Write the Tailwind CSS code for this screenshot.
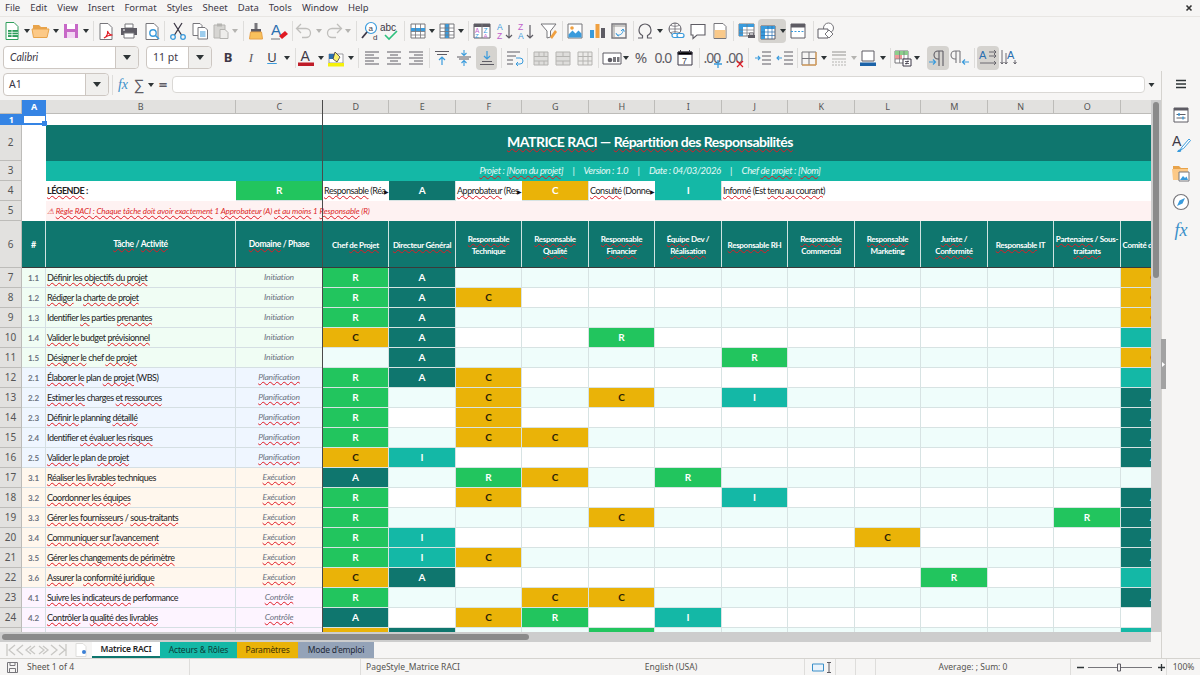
<!DOCTYPE html>
<html lang="fr">
<head>
<meta charset="UTF-8">
<title>Matrice RACI</title>
<script src="https://cdn.jsdelivr.net/npm/@tailwindcss/browser@4"></script>
</head>
<body class="w-[1200px] h-[675px] overflow-hidden bg-[#f6f5f4] font-['Noto_Sans',sans-serif] text-[#3d3846]">

<!-- menu bar -->
<div class="h-[17px] flex items-center gap-[10px] pl-[5px] pr-[7px] text-[9.5px] leading-none border-b border-[#e8e6e3]">
  <span>File</span><span>Edit</span><span>View</span><span>Insert</span><span>Format</span><span>Styles</span><span>Sheet</span><span>Data</span><span>Tools</span><span>Window</span><span>Help</span>
  <svg class="w-[8px] h-[8px] ml-auto" viewBox="0 0 8 8"><path d="M1.5 1.5l5 5M6.5 1.5l-5 5" stroke="#333" stroke-width="1.6"/></svg>
</div>

<!-- standard toolbar -->
<div class="h-[27px] flex items-center pl-[2px]">
  <svg class="w-5 h-5" viewBox="0 0 20 20"><path d="M4 1.5h8l4 4v13H4z" fill="#fff" stroke="#2e9e5b"/><path d="M6 9h10v7H6z" fill="#2e9e5b"/><path d="M6 11.3h10M6 13.6h10M10 9v7" stroke="#fff" stroke-width=".8"/></svg>
  <svg class="w-[6px] h-[4px] ml-[2px]" viewBox="0 0 6 4"><path d="M0 0h6L3 4z" fill="#2e3436"/></svg>
  <svg class="w-5 h-5 ml-px" viewBox="0 0 20 20"><path d="M2 7V4h6l2 2h6v2H2z" fill="#e8a34a"/><path d="M1 8h17l-2 8.500H2.500z" fill="#fcc987" stroke="#e8a34a"/></svg>
  <svg class="w-[6px] h-[4px] ml-[2px]" viewBox="0 0 6 4"><path d="M0 0h6L3 4z" fill="#2e3436"/></svg>
  <svg class="w-5 h-5 ml-[2px]" viewBox="0 0 20 20"><path d="M3 3h14v14H3z" fill="#c768c7"/><path d="M6 3h8v5H6z" fill="#fff"/><path d="M6 11h8v6H6z" fill="#f3d6f3"/></svg>
  <svg class="w-[6px] h-[4px] ml-[2px]" viewBox="0 0 6 4"><path d="M0 0h6L3 4z" fill="#2e3436"/></svg>
  <div class="w-px h-5 ml-[4px] bg-[#dedddb]"></div>
  <svg class="w-5 h-5 ml-[2px]" viewBox="0 0 20 20"><path d="M4 2.500h8l4 4v12H4z" fill="#fff" stroke="#77767b"/><path d="M8 17c3-1 4-5 3.500-7 1 3 3 4 5 4-3 0-6 1-8.500 3z" fill="none" stroke="#e01b24" stroke-width="1.100"/></svg>
  <svg class="w-5 h-5 ml-[3px]" viewBox="0 0 20 20"><path d="M6 3h8v4H6z" fill="#fff" stroke="#77767b"/><path d="M2 7h16v7H2z" fill="#5e5c64"/><path d="M5 12h10v5H5z" fill="#fff" stroke="#77767b"/><path d="M4 9h2" stroke="#fff"/></svg>
  <svg class="w-5 h-5 ml-[3px]" viewBox="0 0 20 20"><path d="M4 2.500h8l4 4v12H4z" fill="#fff" stroke="#77767b"/><circle cx="11" cy="12" r="3.200" fill="none" stroke="#3a9bdc" stroke-width="1.400"/><path d="M13.500 14.500l3.500 3.500" stroke="#3a9bdc" stroke-width="1.600"/></svg>
  <div class="w-px h-5 ml-[2px] bg-[#dedddb]"></div>
  <svg class="w-5 h-5 ml-[3px]" viewBox="0 0 20 20"><path d="M6 2l7.500 12M14 2L6.500 14" stroke="#3d3846" stroke-width="1.300"/><circle cx="5" cy="16" r="2.300" fill="none" stroke="#3a9bdc" stroke-width="1.300"/><circle cx="15" cy="16" r="2.300" fill="none" stroke="#3a9bdc" stroke-width="1.300"/></svg>
  <svg class="w-5 h-5 ml-[2px]" viewBox="0 0 20 20"><path d="M3 2.500h7l2 2v10H3z" fill="#fff" stroke="#77767b"/><path d="M8 6.500h7l2.500 2.500v9H8z" fill="#fff" stroke="#77767b"/><path d="M10 11h5.500M10 13h5.500M10 15h5.500" stroke="#3a9bdc"/></svg>
  <svg class="w-5 h-5 ml-px" viewBox="0 0 20 20"><path d="M3 4h11v13H3z" fill="#d6d5d2" stroke="#b5b4b1"/><path d="M6 2.500h5v3H6z" fill="#b5b4b1"/><path d="M9 8.500h5l3 3v6H9z" fill="#eeedeb" stroke="#b5b4b1"/></svg>
  <svg class="w-[6px] h-[4px] ml-px" viewBox="0 0 6 4"><path d="M0 0h6L3 4z" fill="#b5b4b1"/></svg>
  <div class="w-px h-5 ml-[5px] bg-[#dedddb]"></div>
  <svg class="w-5 h-5 ml-[2px]" viewBox="0 0 20 20"><path d="M8.500 2h3v6h-3z" fill="#77767b"/><path d="M5 8h10v3H5z" fill="#5e5c64"/><path d="M4.500 11h11l1 7h-13z" fill="#f9c15c" stroke="#e8a34a"/></svg>
  <svg class="w-5 h-5 ml-[3px]" viewBox="0 0 20 20"><text x="2" y="14" font-size="15" fill="#2a6fb0" font-family="Liberation Sans">A</text><path d="M10 15l6-5 3 3-6 5z" fill="#e01b24"/><path d="M2 18h9" stroke="#77767b"/></svg>
  <div class="w-px h-5 ml-[3px] bg-[#dedddb]"></div>
  <svg class="w-5 h-5 ml-px" viewBox="0 0 20 20"><path d="M7 3L2.500 7.500 7 12M3 7.500h9a4.500 4.500 0 0 1 0 9H8" fill="none" stroke="#c0bfbc" stroke-width="1.300"/></svg>
  <svg class="w-[6px] h-[4px] ml-[2px]" viewBox="0 0 6 4"><path d="M0 0h6L3 4z" fill="#b5b4b1"/></svg>
  <svg class="w-5 h-5 ml-[2px]" viewBox="0 0 20 20"><path d="M13 3l4.500 4.500L13 12M17 7.500H8a4.500 4.500 0 0 0 0 9h4" fill="none" stroke="#c0bfbc" stroke-width="1.300"/></svg>
  <svg class="w-[6px] h-[4px] ml-px" viewBox="0 0 6 4"><path d="M0 0h6L3 4z" fill="#b5b4b1"/></svg>
  <div class="w-px h-5 ml-[5px] bg-[#dedddb]"></div>
  <svg class="w-5 h-5 ml-[3px]" viewBox="0 0 20 20"><circle cx="11" cy="7" r="5.500" fill="#fff" stroke="#3a9bdc" stroke-width="1.200"/><path d="M7 11l-5 6" stroke="#3d3846" stroke-width="1.800"/><text x="8.500" y="9.500" font-size="8" fill="#3d3846" font-family="Liberation Sans">a</text><text x="13" y="19" font-size="8" fill="#3d3846" font-family="Liberation Sans">d</text></svg>
  <svg class="w-5 h-5" viewBox="0 0 20 20"><text x="0" y="10" font-size="10" fill="#3d3846" font-family="Liberation Sans">abc</text><path d="M5 14l4 4 8-8" fill="none" stroke="#2ec27e" stroke-width="1.600"/></svg>
  <div class="w-px h-5 ml-[4px] bg-[#dedddb]"></div>
  <svg class="w-5 h-5 ml-[3px]" viewBox="0 0 20 20"><path d="M3 3h14v14H3z" fill="#fff" stroke="#77767b"/><path d="M3 7h14v3.500H3z" fill="#3a9bdc"/><path d="M3 10.500h14M3 14h14M7.500 3v14M12.500 3v14" stroke="#77767b" stroke-width=".8"/></svg>
  <svg class="w-[6px] h-[4px] ml-px" viewBox="0 0 6 4"><path d="M0 0h6L3 4z" fill="#2e3436"/></svg>
  <svg class="w-5 h-5 ml-[2px]" viewBox="0 0 20 20"><path d="M3 3h14v14H3z" fill="#fff" stroke="#77767b"/><path d="M8 3h4v14H8z" fill="#3a9bdc"/><path d="M3 7h14M3 10.500h14M3 14h14M8 3v14M12 3v14" stroke="#77767b" stroke-width=".8"/></svg>
  <svg class="w-[6px] h-[4px] ml-px" viewBox="0 0 6 4"><path d="M0 0h6L3 4z" fill="#2e3436"/></svg>
  <div class="w-px h-5 ml-[4px] bg-[#dedddb]"></div>
  <svg class="w-5 h-5 ml-[3px]" viewBox="0 0 20 20"><path d="M2 3h16v14H2z" fill="#fff" stroke="#5e5c64"/><path d="M2 3h16v3H2z" fill="#5e5c64"/><path d="M10 3v14" stroke="#77767b"/><text x="3" y="12" font-size="6.500" fill="#c061cb" font-family="Liberation Sans">A</text><text x="11.500" y="12" font-size="6.500" fill="#3a9bdc" font-family="Liberation Sans">Z</text><text x="3" y="17" font-size="6" fill="#3a9bdc" font-family="Liberation Sans">Z</text><text x="11.500" y="17" font-size="6" fill="#c061cb" font-family="Liberation Sans">A</text></svg>
  <svg class="w-5 h-5 ml-[3px]" viewBox="0 0 20 20"><text x="2" y="9" font-size="8.500" fill="#3a9bdc" font-family="Liberation Sans">A</text><text x="2" y="18" font-size="8.500" fill="#c061cb" font-family="Liberation Sans">Z</text><path d="M14 4v13M11 14l3 3 3-3" fill="none" stroke="#5e5c64" stroke-width="1.200"/></svg>
  <svg class="w-5 h-5 ml-px" viewBox="0 0 20 20"><text x="2" y="9" font-size="8.500" fill="#c061cb" font-family="Liberation Sans">Z</text><text x="2" y="18" font-size="8.500" fill="#3a9bdc" font-family="Liberation Sans">A</text><path d="M14 4v13M11 14l3 3 3-3" fill="none" stroke="#5e5c64" stroke-width="1.200"/></svg>
  <svg class="w-5 h-5 ml-[3px]" viewBox="0 0 20 20"><path d="M2 3h15l-5.500 7v6l-3.500 1v-7z" fill="#fff" stroke="#77767b"/><path d="M11 16l5-7 2 2-5 7z" fill="#f0a040"/></svg>
  <div class="w-px h-5 ml-[3px] bg-[#dedddb]"></div>
  <svg class="w-5 h-5 ml-[2px]" viewBox="0 0 20 20"><path d="M3 3h14v14H3z" fill="#fff" stroke="#77767b"/><path d="M3.500 16.500v-3l4-4 3 3 3-3 3 3v4z" fill="#3a9bdc"/><circle cx="7" cy="7" r="1.800" fill="#f0a040"/></svg>
  <svg class="w-5 h-5 ml-[2px]" viewBox="0 0 20 20"><path d="M3 9h4v8H3z" fill="#3a9bdc"/><path d="M8.500 3h4v14h-4z" fill="#f0a040"/><path d="M14 7h4v10h-4z" fill="#5e5c64"/></svg>
  <svg class="w-5 h-5 ml-[2px]" viewBox="0 0 20 20"><path d="M3 3h14v14H3z" fill="#f6f5f4" stroke="#77767b" stroke-width="1.400"/><path d="M5 3v14M3 5h14" stroke="#9a9996"/><path d="M8 14a5 5 0 0 0 6-6M12 10l2-2 1.500 2.500M8 14l-1-2M8 14l2 1" fill="none" stroke="#3a9bdc"/></svg>
  <div class="w-px h-5 ml-[4px] bg-[#dedddb]"></div>
  <svg class="w-5 h-5 ml-px" viewBox="0 0 20 20"><path d="M3 17h4.500v-2.500A6 6 0 0 1 4 9a6 6 0 0 1 12 0 6 6 0 0 1-3.500 5.500V17H17" fill="none" stroke="#5e5c64" stroke-width="1.200"/></svg>
  <svg class="w-[6px] h-[4px] ml-[2px]" viewBox="0 0 6 4"><path d="M0 0h6L3 4z" fill="#2e3436"/></svg>
  <svg class="w-5 h-5 ml-[3px]" viewBox="0 0 20 20"><circle cx="9" cy="8" r="6" fill="#fff" stroke="#5e5c64"/><path d="M3 8h12M9 2v12M5 4.500c2.500 1 5.500 1 8 0M5 11.500c2.500-1 5.500-1 8 0" fill="none" stroke="#5e5c64" stroke-width=".7"/><rect x="6" y="12.500" width="7" height="4" rx="2" fill="#fff" stroke="#3a9bdc" stroke-width="1.200"/><rect x="11" y="12.500" width="7" height="4" rx="2" fill="#fff" stroke="#3a9bdc" stroke-width="1.200"/></svg>
  <svg class="w-5 h-5 ml-[2px]" viewBox="0 0 20 20"><path d="M3 3.500h14v10.500H9l-4 3.500V14H3z" fill="#fff" stroke="#5e5c64" stroke-width="1.100"/></svg>
  <svg class="w-5 h-5 ml-[2px]" viewBox="0 0 20 20"><path d="M4 2.500h9l3 3v12H4z" fill="#fff" stroke="#77767b"/><path d="M4.500 9h11v8h-11z" fill="#f9c98a"/></svg>
  <div class="w-px h-5 ml-[3px] bg-[#dedddb]"></div>
  <svg class="w-5 h-5 ml-[3px]" viewBox="0 0 20 20"><path d="M2 3h15v12H2z" fill="#fff" stroke="#77767b"/><path d="M2 3h15v3H2zM2 3h4v12H2z" fill="#3a9bdc"/><path d="M2 9h15M2 12h15M10 3v12" stroke="#77767b" stroke-width=".7"/><path d="M11 14h7v3h-7z" fill="#5e5c64"/><path d="M12.500 12h4v2h-4z" fill="#fff" stroke="#5e5c64" stroke-width=".8"/></svg>
  <div class="w-[28px] h-6 ml-px flex items-center bg-[#d5d3cf] rounded">
    <svg class="w-5 h-5" viewBox="0 0 20 20"><path d="M3 5h14v13H3z" fill="#fff" stroke="#5e5c64"/><path d="M3 5h14v3H3zM3 5h4v13H3z" fill="#3a9bdc"/><path d="M3 11h14M3 14.500h14M10 5v13M14 5v13" stroke="#2a6fb0" stroke-width=".7"/></svg>
    <svg class="w-[6px] h-[4px] ml-[2px]" viewBox="0 0 6 4"><path d="M0 0h6L3 4z" fill="#2e3436"/></svg>
  </div>
  <svg class="w-5 h-5 ml-[2px]" viewBox="0 0 20 20"><path d="M3 3h14v14H3z" fill="#fff" stroke="#5e5c64"/><path d="M3 3h14v3.500H3z" fill="#5e5c64"/><path d="M3 10.500h14" stroke="#3a9bdc" stroke-dasharray="2 1.500"/></svg>
  <div class="w-px h-5 ml-[5px] bg-[#dedddb]"></div>
  <svg class="w-5 h-5 ml-[2px]" viewBox="0 0 20 20"><circle cx="12.500" cy="7" r="5" fill="#fff" stroke="#77767b"/><path d="M2 8h10v9H2z" fill="#fff" stroke="#5e5c64"/><path d="M13 9l4 4-4 4-4-4z" fill="#fff" stroke="#77767b"/></svg>
</div>

<!-- formatting toolbar -->
<div class="h-[27px] flex items-center pl-[3px]">
  <div class="w-[136px] h-[23px] flex bg-white border border-[#cdc7c2] rounded text-[10.5px]">
    <span class="flex-1 flex items-center pl-[6px] italic font-['Lato']">Calibri</span>
    <span class="w-[23px] flex items-center justify-center bg-[#f0efed] border-l border-[#cdc7c2] rounded-r"><svg class="w-[8px] h-[5px]" viewBox="0 0 8 5"><path d="M0 0h8L4 5z" fill="#2e3436"/></svg></span>
  </div>
  <div class="w-[66px] h-[23px] ml-[7px] flex bg-white border border-[#cdc7c2] rounded text-[10.5px]">
    <span class="flex-1 flex items-center pl-[6px]">11 pt</span>
    <span class="w-[23px] flex items-center justify-center bg-[#f0efed] border-l border-[#cdc7c2] rounded-r"><svg class="w-[8px] h-[5px]" viewBox="0 0 8 5"><path d="M0 0h8L4 5z" fill="#2e3436"/></svg></span>
  </div>
  <span class="w-5 ml-[6px] text-center text-[13px] font-bold text-[#3d3846]">B</span>
  <span class="w-5 ml-[3px] text-center text-[13px] italic font-['Liberation_Serif'] text-[#5e5c64]">I</span>
  <span class="w-5 ml-px text-center text-[13px] text-[#3d3846] underline decoration-[#3a9bdc]">U</span>
  <svg class="w-[6px] h-[4px] ml-[2px]" viewBox="0 0 6 4"><path d="M0 0h6L3 4z" fill="#2e3436"/></svg>
  <div class="w-px h-5 ml-[5px] bg-[#dedddb]"></div>
  <svg class="w-5 h-5" viewBox="0 0 20 20"><text x="4.500" y="13" font-size="14" fill="#3d3846" font-family="Liberation Sans">A</text><path d="M2 14.500h16V18H2z" fill="#c01c28"/></svg>
  <svg class="w-[6px] h-[4px] ml-[2px]" viewBox="0 0 6 4"><path d="M0 0h6L3 4z" fill="#2e3436"/></svg>
  <svg class="w-5 h-5 ml-[2px]" viewBox="0 0 20 20"><path d="M3 6h14v9H3z" fill="#fff" stroke="#77767b" stroke-width=".7"/><path d="M3 6h6v5H3z" fill="#2a6fb0"/><path d="M9 4l5 5-3 5-4-3z" fill="#f9f06b" stroke="#3d3846" stroke-width=".8"/><path d="M2 15h16v3.500H2z" fill="#f5f10a"/></svg>
  <svg class="w-[6px] h-[4px] ml-[2px]" viewBox="0 0 6 4"><path d="M0 0h6L3 4z" fill="#2e3436"/></svg>
  <div class="w-px h-5 ml-[4px] bg-[#dedddb]"></div>
  <svg class="w-5 h-5 ml-[3px]" viewBox="0 0 20 20"><path d="M3 4h14M3 7h9M3 10h14M3 13h9M3 16h14" stroke="#5e5c64"/></svg>
  <svg class="w-5 h-5 ml-[2px]" viewBox="0 0 20 20"><path d="M3 4h14M6 7h8M3 10h14M6 13h8M3 16h14" stroke="#5e5c64"/></svg>
  <svg class="w-5 h-5 ml-[2px]" viewBox="0 0 20 20"><path d="M3 4h14M8 7h9M3 10h14M8 13h9M3 16h14" stroke="#5e5c64"/></svg>
  <div class="w-px h-5 ml-[3px] bg-[#dedddb]"></div>
  <svg class="w-5 h-5 ml-[2px]" viewBox="0 0 20 20"><path d="M3 3.500h14M5 6.500h10" stroke="#5e5c64"/><path d="M10 17V9M7 12l3-3 3 3" fill="none" stroke="#3a9bdc" stroke-width="1.200"/></svg>
  <svg class="w-5 h-5 ml-[2px]" viewBox="0 0 20 20"><path d="M3 9h14M5 11h10" stroke="#5e5c64"/><path d="M10 2v5M7.500 5l2.500 2.500L12.500 5M10 18v-5M7.500 15l2.500-2.500 2.500 2.500" fill="none" stroke="#3a9bdc" stroke-width="1.100"/></svg>
  <div class="w-[21px] h-6 ml-[2px] flex items-center justify-center bg-[#d5d3cf] rounded"><svg class="w-5 h-5" viewBox="0 0 20 20"><path d="M3 16.500h14M5 13.500h10" stroke="#5e5c64"/><path d="M10 3v8M7 8l3 3 3-3" fill="none" stroke="#3a9bdc" stroke-width="1.200"/></svg></div>
  <div class="w-px h-5 ml-[4px] bg-[#dedddb]"></div>
  <svg class="w-5 h-5 ml-[2px]" viewBox="0 0 20 20"><path d="M3 4h13M3 8h9M3 12h6M3 16h6" stroke="#5e5c64"/><path d="M12 10h4a2 2 0 0 1 0 6h-4M14 14l-2 2 2 2" fill="none" stroke="#3a9bdc"/></svg>
  <div class="w-px h-5 ml-[3px] bg-[#dedddb]"></div>
  <svg class="w-5 h-5 ml-[3px]" viewBox="0 0 20 20"><path d="M3 4h14v13H3z" fill="#dedddb" stroke="#b5b4b1"/><path d="M3 8.500h14M3 13h14M8 4v4.500M13 4v4.500M8 13v4M13 13v4" stroke="#b5b4b1"/></svg>
  <svg class="w-5 h-5 ml-[2px]" viewBox="0 0 20 20"><path d="M3 4h14v13H3z" fill="#dedddb" stroke="#b5b4b1"/><path d="M3 8.500h14M3 13h14M10 4v4.500M10 13v4" stroke="#b5b4b1"/></svg>
  <svg class="w-5 h-5 ml-[2px]" viewBox="0 0 20 20"><path d="M3 4h14v13H3z" fill="#ebeae8" stroke="#b5b4b1"/><path d="M3 8.500h14M3 13h14M8 4v13M13 4v13" stroke="#b5b4b1"/></svg>
  <div class="w-px h-5 ml-[3px] bg-[#dedddb]"></div>
  <svg class="w-5 h-5 ml-[3px]" viewBox="0 0 20 20"><path d="M1 5h18v11H1z" fill="#fff" stroke="#5e5c64"/><circle cx="8" cy="12" r="2.300" fill="#5e5c64"/><path d="M11 9h3v5h-3zM15 9h2.500v5H15z" fill="#77767b"/></svg>
  <svg class="w-[6px] h-[4px] ml-px" viewBox="0 0 6 4"><path d="M0 0h6L3 4z" fill="#2e3436"/></svg>
  <span class="w-5 ml-[2px] text-center text-[15px] text-[#5e5c64]">%</span>
  <span class="w-5 ml-[2px] text-center text-[14px] tracking-[-1px] text-[#5e5c64]">0.0</span>
  <svg class="w-5 h-5 ml-[2px]" viewBox="0 0 20 20"><path d="M3 4h14v13H3z" fill="#fff" stroke="#3d3846"/><path d="M3 4h14v2.500H3zM5.500 2v3M14.500 2v3" stroke="#3d3846"/><text x="7" y="15.500" font-size="9" fill="#3d3846" font-family="Liberation Sans">7</text></svg>
  <div class="w-px h-5 ml-[4px] bg-[#dedddb]"></div>
  <div class="w-5 h-5 ml-[2px] relative text-[14px] leading-5 tracking-[-1px] text-[#5e5c64] text-center">.00<svg class="absolute right-0 bottom-0 w-[8px] h-[8px]" viewBox="0 0 8 8"><path d="M4 0v8M0 4h8" stroke="#3a9bdc" stroke-width="1.300"/></svg></div>
  <div class="w-5 h-5 ml-[2px] relative text-[14px] leading-5 tracking-[-1px] text-[#5e5c64] text-center">.00<svg class="absolute right-0 bottom-0 w-[8px] h-[8px]" viewBox="0 0 8 8"><path d="M1 1l6 6M7 1L1 7" stroke="#e01b24" stroke-width="1.200"/></svg></div>
  <div class="w-px h-5 ml-[4px] bg-[#dedddb]"></div>
  <svg class="w-5 h-5 ml-[4px]" viewBox="0 0 20 20"><path d="M9 4h9M9 8h9M9 12h9M9 16h9" stroke="#5e5c64"/><path d="M2 10h5M5 8l2 2-2 2" fill="none" stroke="#3a9bdc" stroke-width="1.100"/></svg>
  <svg class="w-5 h-5 ml-[2px]" viewBox="0 0 20 20"><path d="M9 4h9M9 8h9M9 12h9M9 16h9" stroke="#5e5c64"/><path d="M7 10H2M4 8l-2 2 2 2" fill="none" stroke="#3a9bdc" stroke-width="1.100"/></svg>
  <div class="w-px h-5 ml-[2px] bg-[#dedddb]"></div>
  <svg class="w-5 h-5 ml-px" viewBox="0 0 20 20"><path d="M3 4h14v13H3zM10 4v13M3 10.500h14" fill="none" stroke="#77767b"/><path d="M3 17h14M17 4v13" stroke="#f0a040"/></svg>
  <svg class="w-[6px] h-[4px] ml-[2px]" viewBox="0 0 6 4"><path d="M0 0h6L3 4z" fill="#2e3436"/></svg>
  <svg class="w-5 h-5 ml-[2px]" viewBox="0 0 20 20"><path d="M3 4h14M3 7h14" stroke="#b5b4b1" stroke-width="1.500"/><path d="M3 11h14" stroke="#b5b4b1"/><path d="M3 14h14M3 17h14" stroke="#b5b4b1" stroke-dasharray="2 1"/></svg>
  <svg class="w-[6px] h-[4px] ml-[2px]" viewBox="0 0 6 4"><path d="M0 0h6L3 4z" fill="#b5b4b1"/></svg>
  <svg class="w-5 h-5 ml-px" viewBox="0 0 20 20"><path d="M4 3h12v10H4z" fill="#fff" stroke="#5e5c64"/><path d="M2 14.500h16V18H2z" fill="#1c63a8"/></svg>
  <svg class="w-[6px] h-[4px] ml-[2px]" viewBox="0 0 6 4"><path d="M0 0h6L3 4z" fill="#2e3436"/></svg>
  <div class="w-px h-5 ml-[4px] bg-[#dedddb]"></div>
  <svg class="w-5 h-5 ml-[2px]" viewBox="0 0 20 20"><path d="M2 3h13v12H2z" fill="#fff" stroke="#77767b"/><path d="M2 3h13v4H2z" fill="#8ccf8c"/><path d="M2 7h7v4H2z" fill="#ef9a9a"/><path d="M6.500 3v12M11 3v12M2 11h13" stroke="#77767b" stroke-width=".7"/><path d="M10 11h8v7h-8z" fill="#fff" stroke="#3d3846"/><path d="M12 13.500h4M12 15.500h4M15 12.500l-2 4" stroke="#3d3846" stroke-width=".8"/></svg>
  <svg class="w-[6px] h-[4px] ml-px" viewBox="0 0 6 4"><path d="M0 0h6L3 4z" fill="#2e3436"/></svg>
  <div class="w-[22px] h-6 ml-[7px] flex items-center justify-center bg-[#d5d3cf] rounded"><svg class="w-5 h-5" viewBox="0 0 20 20"><path d="M11 3v15M15 3v15M15 3h-5a4 4 0 0 0 0 8h1" fill="none" stroke="#5e5c64" stroke-width="1.100"/><path d="M1 14h6M5 11.500L7.500 14 5 16.500" fill="none" stroke="#3a9bdc" stroke-width="1.200"/></svg></div>
  <svg class="w-5 h-5 ml-px" viewBox="0 0 20 20"><path d="M6 3v12M10 3v12M10 3H5a4 4 0 0 0 0 8h1" fill="none" stroke="#77767b" stroke-width="1.100"/><path d="M19 14h-6M15 11.500L12.500 14l2.500 2.500" fill="none" stroke="#3a9bdc" stroke-width="1.200"/></svg>
  <div class="w-px h-5 ml-[4px] bg-[#dedddb]"></div>
  <div class="w-[22px] h-6 ml-[2px] flex items-center justify-center bg-[#d5d3cf] rounded"><svg class="w-5 h-5" viewBox="0 0 20 20"><text x="1" y="11" font-size="11" fill="#2a6fb0" font-family="Liberation Sans">A</text><path d="M11 4h7M11 8h7M2 15h16M16 2l2 2-2 2M16 6l2 2-2 2M16 13l2 2-2 2" fill="none" stroke="#5e5c64" stroke-width=".9"/></svg></div>
  <svg class="w-5 h-5" viewBox="0 0 20 20"><text x="8" y="11" font-size="11" fill="#2a6fb0" font-family="Liberation Sans">A</text><path d="M3 2v14M7 5v11M16 12v4M1.500 14l1.500 2 1.500-2M5.500 14L7 16l1.500-2M14.500 14l1.500 2 1.500-2" fill="none" stroke="#5e5c64" stroke-width=".9"/></svg>
</div>

<div class="flex h-[587px]">
  <div class="w-[1161px] flex flex-col">
    <!-- formula bar -->
    <div class="h-[27px] flex items-center pl-[3px]">
      <div class="w-[106px] h-[23px] flex bg-white border border-[#cdc7c2] rounded text-[10.5px]">
        <span class="flex-1 flex items-center pl-[5px]">A1</span>
        <span class="w-[23px] flex items-center justify-center bg-[#f0efed] border-l border-[#cdc7c2] rounded-r"><svg class="w-[8px] h-[5px]" viewBox="0 0 8 5"><path d="M0 0h8L4 5z" fill="#2e3436"/></svg></span>
      </div>
      <div class="w-px h-5 ml-[3px] bg-[#dedddb]"></div>
      <span class="w-4 ml-[2px] text-center text-[14px] italic font-['Liberation_Serif'] text-[#3a8fc9]">fx</span>
      <span class="w-4 text-center text-[15px] text-[#5e5c64]">∑</span>
      <svg class="w-[6px] h-[4px] ml-[1px]" viewBox="0 0 6 4"><path d="M0 0h6L3 4z" fill="#2e3436"/></svg>
      <span class="w-4 ml-[1px] text-center text-[15px] font-bold text-[#5e5c64]">=</span>
      <div class="w-[973px] h-[17px] ml-[1px] bg-white border border-[#dad8d5] rounded-sm"></div>
      <svg class="w-[7px] h-[4px] ml-[3px]" viewBox="0 0 6 4"><path d="M0 0h6L3 4z" fill="#2e3436"/></svg>
    </div>

    <!-- sheet and vertical scrollbar -->
    <div class="h-[534px] pt-[2px] flex">
      <div class="relative w-[1151px] h-[532px] overflow-hidden bg-white">
        <div id="sheet" class="w-[1254px] grid grid-cols-[22px_24px_190px_87px_66px_67px_66px_67px_66px_67px_66px_67px_66px_67px_66px_67px_66px_67px] grid-rows-[14px_11px_36px_20px_20px_20px_47px] auto-rows-[20px] font-['Lato',sans-serif] text-[9px] tracking-[-0.45px] text-[#222]">
          <!-- column headers -->
          <div class="bg-[#e2e1df] border-r border-b border-[#bdbcb9]"></div>
          <div class="flex items-center justify-center bg-[#3584e4] text-white font-bold font-['Noto_Sans'] text-[9px]">A</div>
          <div class="flex items-center justify-center bg-[#e2e1df] border-r border-b border-[#bdbcb9] text-[#555] font-['Noto_Sans'] text-[9px]">B</div>
          <div class="flex items-center justify-center bg-[#e2e1df] border-r border-b border-[#bdbcb9] text-[#555] font-['Noto_Sans'] text-[9px]">C</div>
          <div class="flex items-center justify-center bg-[#e2e1df] border-r border-b border-[#bdbcb9] text-[#555] font-['Noto_Sans'] text-[9px]">D</div>
          <div class="flex items-center justify-center bg-[#e2e1df] border-r border-b border-[#bdbcb9] text-[#555] font-['Noto_Sans'] text-[9px]">E</div>
          <div class="flex items-center justify-center bg-[#e2e1df] border-r border-b border-[#bdbcb9] text-[#555] font-['Noto_Sans'] text-[9px]">F</div>
          <div class="flex items-center justify-center bg-[#e2e1df] border-r border-b border-[#bdbcb9] text-[#555] font-['Noto_Sans'] text-[9px]">G</div>
          <div class="flex items-center justify-center bg-[#e2e1df] border-r border-b border-[#bdbcb9] text-[#555] font-['Noto_Sans'] text-[9px]">H</div>
          <div class="flex items-center justify-center bg-[#e2e1df] border-r border-b border-[#bdbcb9] text-[#555] font-['Noto_Sans'] text-[9px]">I</div>
          <div class="flex items-center justify-center bg-[#e2e1df] border-r border-b border-[#bdbcb9] text-[#555] font-['Noto_Sans'] text-[9px]">J</div>
          <div class="flex items-center justify-center bg-[#e2e1df] border-r border-b border-[#bdbcb9] text-[#555] font-['Noto_Sans'] text-[9px]">K</div>
          <div class="flex items-center justify-center bg-[#e2e1df] border-r border-b border-[#bdbcb9] text-[#555] font-['Noto_Sans'] text-[9px]">L</div>
          <div class="flex items-center justify-center bg-[#e2e1df] border-r border-b border-[#bdbcb9] text-[#555] font-['Noto_Sans'] text-[9px]">M</div>
          <div class="flex items-center justify-center bg-[#e2e1df] border-r border-b border-[#bdbcb9] text-[#555] font-['Noto_Sans'] text-[9px]">N</div>
          <div class="flex items-center justify-center bg-[#e2e1df] border-r border-b border-[#bdbcb9] text-[#555] font-['Noto_Sans'] text-[9px]">O</div>
          <div class="bg-[#e2e1df] border-r border-b border-[#bdbcb9]"></div>
          <div class="bg-[#e2e1df] border-r border-b border-[#bdbcb9]"></div>

          <!-- row 1 -->
          <div class="flex items-center justify-center bg-[#3584e4] text-white font-bold font-['Noto_Sans'] text-[9px] leading-none">1</div>
          <div class="relative border-2 border-[#3584e4] border-r-[1px]"><span class="absolute -right-[2px] -bottom-[3px] w-[5px] h-[5px] bg-[#3584e4]"></span></div>
          <div class="col-span-16"></div>

          <!-- row 2 -->
          <div class="flex items-center justify-center bg-[#e2e1df] border-r border-b border-[#bdbcb9] text-[#555] font-['Noto_Sans'] text-[10px]">2</div>
          <div></div>
          <div class="col-span-16 flex items-center justify-center pb-[3px] bg-[#0f766e] text-white font-bold text-[14px] tracking-[-0.5px]"><u class="underline decoration-wavy decoration-[#e01b24] decoration-1 [text-decoration-skip-ink:none]">MATRICE RACI</u>&nbsp;—&nbsp;<u class="underline decoration-wavy decoration-[#e01b24] decoration-1 [text-decoration-skip-ink:none]">Répartition des Responsabilités</u></div>

          <!-- row 3 -->
          <div class="flex items-center justify-center bg-[#e2e1df] border-r border-b border-[#bdbcb9] text-[#555] font-['Noto_Sans'] text-[10px]">3</div>
          <div></div>
          <div class="col-span-16 flex items-center justify-center bg-[#14b8a6] text-white/90 italic text-[9.5px] tracking-[-0.35px] whitespace-pre"><span><u class="underline decoration-wavy decoration-[#e01b24] decoration-1 [text-decoration-skip-ink:none]">Projet</u> : [<u class="underline decoration-wavy decoration-[#e01b24] decoration-1 [text-decoration-skip-ink:none]">Nom du projet</u>]     |     Version : 1.0     |     Date : 04/03/2026     |     Chef <u class="underline decoration-wavy decoration-[#e01b24] decoration-1 [text-decoration-skip-ink:none]">de projet</u> : [<u class="underline decoration-wavy decoration-[#e01b24] decoration-1 [text-decoration-skip-ink:none]">Nom</u>]</span></div>

          <!-- row 4: legend -->
          <div class="flex items-center justify-center bg-[#e2e1df] border-r border-b border-[#bdbcb9] text-[#555] font-['Noto_Sans'] text-[10px]">4</div>
          <div></div>
          <div class="flex items-center pl-px font-bold"><u class="underline decoration-wavy decoration-[#e01b24] decoration-1 [text-decoration-skip-ink:none]">LÉGENDE</u>&nbsp;:</div>
          <div class="flex items-center justify-center bg-[#22c55e] text-white font-bold text-[10px] border-r border-b border-[#d7e3e3]">R</div>
          <div class="relative flex items-center pl-px whitespace-nowrap overflow-hidden"><span><u class="underline decoration-wavy decoration-[#e01b24] decoration-1 [text-decoration-skip-ink:none]">Responsable</u> (Réa</span><span class="absolute right-0 text-[6px] text-[#111]">▶</span></div>
          <div class="flex items-center justify-center bg-[#0f766e] text-white font-bold text-[10px] border-r border-b border-[#d7e3e3]">A</div>
          <div class="relative flex items-center pl-px whitespace-nowrap overflow-hidden"><span><u class="underline decoration-wavy decoration-[#e01b24] decoration-1 [text-decoration-skip-ink:none]">Approbateur</u> (Res</span><span class="absolute right-0 text-[6px] text-[#111]">▶</span></div>
          <div class="flex items-center justify-center bg-[#eab308] text-white font-bold text-[10px] border-r border-b border-[#d7e3e3]">C</div>
          <div class="relative flex items-center pl-px whitespace-nowrap overflow-hidden"><span><u class="underline decoration-wavy decoration-[#e01b24] decoration-1 [text-decoration-skip-ink:none]">Consulté</u> (Donne</span><span class="absolute right-0 text-[6px] text-[#111]">▶</span></div>
          <div class="flex items-center justify-center bg-[#14b8a6] text-white font-bold text-[10px] border-r border-b border-[#d7e3e3]">I</div>
          <div class="col-span-8 flex items-center pl-px"><span><u class="underline decoration-wavy decoration-[#e01b24] decoration-1 [text-decoration-skip-ink:none]">Informé</u> (Est <u class="underline decoration-wavy decoration-[#e01b24] decoration-1 [text-decoration-skip-ink:none]">tenu au courant</u>)</span></div>

          <!-- row 5: rule -->
          <div class="flex items-center justify-center bg-[#e2e1df] border-r border-b border-[#bdbcb9] text-[#555] font-['Noto_Sans'] text-[10px]">5</div>
          <div></div>
          <div class="col-span-16 flex items-center pl-px bg-[#fef2f2] text-[#dc2626] italic text-[8px] tracking-[-0.1px]"><span>⚠ <u class="underline decoration-wavy decoration-[#e01b24] decoration-1 [text-decoration-skip-ink:none]">Règle RACI : Chaque tâche doit avoir exactement</u> 1 <u class="underline decoration-wavy decoration-[#e01b24] decoration-1 [text-decoration-skip-ink:none]">Approbateur</u> (A) <u class="underline decoration-wavy decoration-[#e01b24] decoration-1 [text-decoration-skip-ink:none]">et au moins</u> 1 <u class="underline decoration-wavy decoration-[#e01b24] decoration-1 [text-decoration-skip-ink:none]">Responsable</u> (R)</span></div>

          <!-- row 6: table header -->
          <div class="flex items-center justify-center bg-[#e2e1df] border-r border-b border-[#bdbcb9] text-[#555] font-['Noto_Sans'] text-[10px]">6</div>
          <div class="flex items-center justify-center bg-[#0f766e] text-white font-bold text-[9px] border-r border-[#cfe3e1]">#</div>
          <div class="flex items-center justify-center bg-[#0f766e] text-white font-bold text-[8.5px] tracking-[-0.3px] border-r border-[#cfe3e1]"><span><u class="underline decoration-wavy decoration-[#e01b24] decoration-1 [text-decoration-skip-ink:none]">Tâche</u> / <u class="underline decoration-wavy decoration-[#e01b24] decoration-1 [text-decoration-skip-ink:none]">Activité</u></span></div>
          <div class="flex items-center justify-center bg-[#0f766e] text-white font-bold text-[8.5px] tracking-[-0.3px] border-r border-[#cfe3e1]"><span><u class="underline decoration-wavy decoration-[#e01b24] decoration-1 [text-decoration-skip-ink:none]">Domaine</u> / Phase</span></div>
          <div class="flex items-center justify-center text-center leading-[12px] bg-[#0f766e] text-white font-bold text-[8px] tracking-[-0.3px] border-r border-[#cfe3e1]"><span>Chef <u class="underline decoration-wavy decoration-[#e01b24] decoration-1 [text-decoration-skip-ink:none]">de Projet</u></span></div>
          <div class="flex items-center justify-center text-center leading-[12px] bg-[#0f766e] text-white font-bold text-[8px] tracking-[-0.3px] border-r border-[#cfe3e1]"><u class="underline decoration-wavy decoration-[#e01b24] decoration-1 [text-decoration-skip-ink:none]">Directeur Général</u></div>
          <div class="flex items-center justify-center text-center leading-[12px] bg-[#0f766e] text-white font-bold text-[8px] tracking-[-0.3px] border-r border-[#cfe3e1]"><span><u class="underline decoration-wavy decoration-[#e01b24] decoration-1 [text-decoration-skip-ink:none]">Responsable</u><br>Technique</span></div>
          <div class="flex items-center justify-center text-center leading-[12px] bg-[#0f766e] text-white font-bold text-[8px] tracking-[-0.3px] border-r border-[#cfe3e1]"><span><u class="underline decoration-wavy decoration-[#e01b24] decoration-1 [text-decoration-skip-ink:none]">Responsable</u><br><u class="underline decoration-wavy decoration-[#e01b24] decoration-1 [text-decoration-skip-ink:none]">Qualité</u></span></div>
          <div class="flex items-center justify-center text-center leading-[12px] bg-[#0f766e] text-white font-bold text-[8px] tracking-[-0.3px] border-r border-[#cfe3e1]"><span><u class="underline decoration-wavy decoration-[#e01b24] decoration-1 [text-decoration-skip-ink:none]">Responsable</u><br><u class="underline decoration-wavy decoration-[#e01b24] decoration-1 [text-decoration-skip-ink:none]">Financier</u></span></div>
          <div class="flex items-center justify-center text-center leading-[12px] bg-[#0f766e] text-white font-bold text-[8px] tracking-[-0.3px] border-r border-[#cfe3e1]"><span><u class="underline decoration-wavy decoration-[#e01b24] decoration-1 [text-decoration-skip-ink:none]">Équipe</u> Dev /<br><u class="underline decoration-wavy decoration-[#e01b24] decoration-1 [text-decoration-skip-ink:none]">Réalisation</u></span></div>
          <div class="flex items-center justify-center text-center leading-[12px] bg-[#0f766e] text-white font-bold text-[8px] tracking-[-0.3px] border-r border-[#cfe3e1]"><span><u class="underline decoration-wavy decoration-[#e01b24] decoration-1 [text-decoration-skip-ink:none]">Responsable</u> RH</span></div>
          <div class="flex items-center justify-center text-center leading-[12px] bg-[#0f766e] text-white font-bold text-[8px] tracking-[-0.3px] border-r border-[#cfe3e1]"><span><u class="underline decoration-wavy decoration-[#e01b24] decoration-1 [text-decoration-skip-ink:none]">Responsable</u><br>Commercial</span></div>
          <div class="flex items-center justify-center text-center leading-[12px] bg-[#0f766e] text-white font-bold text-[8px] tracking-[-0.3px] border-r border-[#cfe3e1]"><span><u class="underline decoration-wavy decoration-[#e01b24] decoration-1 [text-decoration-skip-ink:none]">Responsable</u><br>Marketing</span></div>
          <div class="flex items-center justify-center text-center leading-[12px] bg-[#0f766e] text-white font-bold text-[8px] tracking-[-0.3px] border-r border-[#cfe3e1]"><span><u class="underline decoration-wavy decoration-[#e01b24] decoration-1 [text-decoration-skip-ink:none]">Juriste</u> /<br><u class="underline decoration-wavy decoration-[#e01b24] decoration-1 [text-decoration-skip-ink:none]">Conformité</u></span></div>
          <div class="flex items-center justify-center text-center leading-[12px] bg-[#0f766e] text-white font-bold text-[8px] tracking-[-0.3px] border-r border-[#cfe3e1]"><span><u class="underline decoration-wavy decoration-[#e01b24] decoration-1 [text-decoration-skip-ink:none]">Responsable</u> IT</span></div>
          <div class="flex items-center justify-center text-center leading-[12px] bg-[#0f766e] text-white font-bold text-[8px] tracking-[-0.3px] border-r border-[#cfe3e1]"><span><u class="underline decoration-wavy decoration-[#e01b24] decoration-1 [text-decoration-skip-ink:none]">Partenaires</u> / Sous-<br><u class="underline decoration-wavy decoration-[#e01b24] decoration-1 [text-decoration-skip-ink:none]">traitants</u></span></div>
          <div class="flex items-center justify-center whitespace-nowrap bg-[#0f766e] text-white font-bold text-[8px] tracking-[-0.3px] border-r border-[#cfe3e1]">Comité de Pilotage</div>
          <div class="bg-[#0f766e]"></div>
        </div>
        <!-- freeze lines -->
        <div class="absolute left-[322px] top-0 w-px h-[532px] bg-[#4a4a4a]"></div>
        <div class="absolute left-[22px] top-[167px] w-[1129px] h-px bg-[#3a3a3a]"></div>
      </div>
      <div class="w-[10px] h-[532px] bg-[#cdcdcd] flex justify-center">
        <div class="w-[6px] h-[176px] mt-[2px] rounded-full bg-[#8a8a8a]"></div>
      </div>
    </div>

    <!-- horizontal scrollbar -->
    <div class="h-[10px] w-[1151px] bg-[#cdcdcd] flex items-center pl-[2px]">
      <div class="w-[527px] h-[6px] rounded-full bg-[#8a8a8a]"></div>
    </div>

    <!-- sheet tabs -->
    <div class="h-[16px] flex items-stretch text-[8.5px] tracking-[-0.2px] leading-none">
      <svg class="w-[62px] h-[16px] ml-[5px]" viewBox="0 0 62 16"><path d="M2 2v12M10 3L4 8l6 5M18 3l-6 5 6 5M26 4l-5 4 5 4M30 4l-5 4 5 4M34 4l5 4-5 4M38 4l5 4-5 4M46 3l6 5-6 5M54 3l6 5-6 5M61 2v12" fill="none" stroke="#c9c8c5" stroke-width="1.300"/></svg>
      <svg class="w-[12px] h-[14px] ml-[8px] mt-px" viewBox="0 0 12 14"><path d="M1 .5h7l3 3V13.500H1z" fill="#fff" stroke="#dedddb"/><circle cx="9" cy="9" r="2" fill="#3a7fd5"/></svg>
      <div class="w-[68px] ml-[5px] flex items-center justify-center bg-white font-semibold text-[#222] border-b-2 border-[#0f766e]">Matrice RACI</div>
      <div class="w-[77px] flex items-center justify-center bg-[#14b8a6] text-[#0b3b37]">Acteurs &amp; Rôles</div>
      <div class="w-[61px] flex items-center justify-center bg-[#eab308] text-[#3d2f05]">Paramètres</div>
      <div class="w-[76px] flex items-center justify-center bg-[#94a3b8] text-[#1f2937]">Mode d'emploi</div>
    </div>
  </div>

  <!-- sidebar -->
  <div class="relative flex-1 border-l border-[#d5d3cf] flex flex-col items-center">
    <svg class="w-[12px] h-[10px] mt-[8px]" viewBox="0 0 12 10"><path d="M1 1.500h10M1 5h10M1 8.500h10" stroke="#2e3436" stroke-width="1.300"/></svg>
    <svg class="w-5 h-5 mt-[16px]" viewBox="0 0 20 20"><path d="M3 3h14v14H3z" fill="#fff" stroke="#5e5c64"/><path d="M3 3h14v2.500H3z" fill="#5e5c64"/><path d="M5.500 9.500h9M5.500 13h9" stroke="#5e5c64"/><path d="M8 8v3M12 11.500v3" stroke="#3a9bdc" stroke-width="1.400"/></svg>
    <svg class="w-5 h-5 mt-[9px]" viewBox="0 0 20 20"><text x="1" y="12" font-size="14" fill="#3d3846" font-family="Liberation Sans">A</text><path d="M18 5l-7 8-2 3 3.500-1.500 7-8z" fill="#fff" stroke="#3a9bdc"/><path d="M6 18c1-3 3-3 4-2s0 2.500-4 2z" fill="#3a9bdc"/></svg>
    <svg class="w-5 h-5 mt-[9px]" viewBox="0 0 20 20"><path d="M2 5V3h6l2 2h7v2H2z" fill="#e8a34a"/><path d="M1 6h16v11H2z" fill="#fcc987"/><path d="M8 9h10v9H8z" fill="#fff" stroke="#77767b"/><path d="M9 17l3-4 2 2 1.500-1.500L17 17z" fill="#3a9bdc"/></svg>
    <svg class="w-5 h-5 mt-[9px]" viewBox="0 0 20 20"><circle cx="10" cy="10" r="7.500" fill="#fff" stroke="#77767b" stroke-width="1.200"/><path d="M14 6l-2.500 5.500L6 14l2.500-5.500z" fill="#3a9bdc"/></svg>
    <span class="mt-[8px] font-['Liberation_Serif'] italic text-[18px] leading-5 text-[#3a8fc9]">fx</span>
    <div class="absolute -left-px top-[268px] w-[5px] h-[50px] bg-[#a2a2a2] flex items-center justify-center">
      <svg class="w-[3px] h-[5px]" viewBox="0 0 3 5"><path d="M0 0l3 2.500L0 5z" fill="#fff"/></svg>
    </div>
  </div>
</div>

<!-- status bar -->
<div class="h-[17px] flex items-center border-t border-[#d5d3cf] text-[8.5px] leading-none text-[#55534f]">
  <div class="w-[190px] h-full flex items-center border-r border-[#dedddb] pl-[7px]">
    <svg class="w-[11px] h-[11px]" viewBox="0 0 11 11"><path d="M.5.500h10v10H.5z" fill="none" stroke="#77767b"/><path d="M3 .5h5v3H3zM2.500 6.500h6v4h-6z" fill="none" stroke="#77767b"/></svg>
    <span class="ml-[9px]">Sheet 1 of 4</span>
  </div>
  <div class="w-[171px] h-full border-r border-[#dedddb]"></div>
  <div class="w-[239px] h-full flex items-center pl-[5px]">PageStyle_Matrice RACI</div>
  <div class="w-[142px] h-full flex items-center justify-center">English (USA)</div>
  <div class="w-[63px] h-full border-r border-[#dedddb]"></div>
  <div class="w-[31px] h-full flex items-center border-r border-[#dedddb] pl-[7px]">
    <svg class="w-[20px] h-[11px]" viewBox="0 0 20 11"><path d="M.5 2h11v7H.5z" fill="#eaf3fb" stroke="#3a8fc9"/><path d="M15 .5h4M15 10.500h4M17 .5v10" stroke="#5e5c64"/></svg>
  </div>
  <div class="w-[20px] h-full border-r border-[#dedddb]"></div>
  <div class="w-[20px] h-full border-r border-[#dedddb]"></div>
  <div class="w-[195px] h-full flex items-center justify-center border-r border-[#dedddb]">Average: ; Sum: 0</div>
  <div class="w-[96px] h-full flex items-center border-r border-[#dedddb]">
    <svg class="w-[90px] h-[11px] ml-[5px]" viewBox="0 0 90 11"><path d="M12 5.500h64" stroke="#77767b"/><path d="M1 5.500h7M82 5.500h7M85.500 2v7" stroke="#2e3436" stroke-width="1.300"/><path d="M41.500 2h3v7h-3z" fill="#f6f5f4" stroke="#5e5c64"/></svg>
  </div>
  <div class="flex-1 text-center">100%</div>
</div>

<script>
// RACI rows: num, task ({..} marks a spell-check squiggle), phase, then roles D..P
const rows = [
  ['1.1', '{Définir les objectifs du projet}', 'Initiation', 'RA..........C'],
  ['1.2', '{Rédiger} la {charte de projet}', 'Initiation', 'RAC.........C'],
  ['1.3', 'Identifier {les} parties {prenantes}', 'Initiation', 'RA..........C'],
  ['1.4', '{Valider le} budget {prévisionnel}', 'Initiation', 'CA..R.......I'],
  ['1.5', '{Désigner le} chef {de projet}', 'Initiation', '.A....R.....C'],
  ['2.1', '{Élaborer le} plan {de projet} (WBS)', '{Planification}', 'RAC.........I'],
  ['2.2', '{Estimer les} charges {et ressources}', '{Planification}', 'R.C.C.I.....A'],
  ['2.3', '{Définir le} planning {détaillé}', '{Planification}', 'R.C.........A'],
  ['2.4', 'Identifier {et évaluer les risques}', '{Planification}', 'R.CC........A'],
  ['2.5', '{Valider le} plan {de projet}', '{Planification}', 'CI..........A'],
  ['3.1', '{Réaliser les livrables} techniques', '{Exécution}', 'A.RC.R.......'],
  ['3.2', '{Coordonner les équipes}', '{Exécution}', 'R.C...I.....A'],
  ['3.3', '{Gérer les fournisseurs} / {sous-traitants}', '{Exécution}', 'R...C......RA'],
  ['3.4', "{Communiquer sur l'avancement}", '{Exécution}', 'RI......C...A'],
  ['3.5', '{Gérer les changements de périmètre}', '{Exécution}', 'RIC.........A'],
  ['3.6', '{Assurer} la {conformité juridique}', '{Exécution}', 'CA.......R..I'],
  ['4.1', '{Suivre les indicateurs de} performance', '{Contrôle}', 'R..CC.......A'],
  ['4.2', '{Contrôler} la {qualité des livrables}', '{Contrôle}', 'A.CR.I.......'],
  ['4.3', '', '{Contrôle}', 'CA..R.......I']
];
const phaseBg = {
  '1': 'bg-[#f0fdf4]',
  '2': 'bg-[#eff6ff]',
  '3': 'bg-[#fff7ed]',
  '4': 'bg-[#fdf4ff]'
};
const roleCls = {
  R: 'bg-[#22c55e] text-white',
  A: 'bg-[#0f766e] text-white',
  C: 'bg-[#eab308] text-[#2b2205]',
  I: 'bg-[#14b8a6] text-white'
};
const squiggle = s => s.replace(/\{(.*?)\}/g, '<u class="underline decoration-wavy decoration-[#e01b24] decoration-1 [text-decoration-skip-ink:none]">$1</u>');

let html = '';
rows.forEach((r, i) => {
  const bg = phaseBg[r[0][0]];
  const stripe = i % 2 === 0 ? 'bg-[#effdfb]' : 'bg-white';
  html += `<div class="flex items-center justify-center bg-[#e2e1df] border-r border-b border-[#bdbcb9] text-[#555] font-['Noto_Sans'] tracking-normal text-[10px]">${i + 7}</div>`;
  html += `<div class="flex items-center justify-center ${bg} border-r border-b border-[#d5dfe3] text-[#6b7280] font-bold text-[8px] tracking-normal">${r[0]}</div>`;
  html += `<div class="flex items-center pl-px ${bg} border-r border-b border-[#d5dfe3] whitespace-nowrap"><span>${squiggle(r[1])}</span></div>`;
  html += `<div class="flex items-center justify-center ${bg} border-r border-b border-[#d5dfe3] text-[#6b7280] italic text-[8.5px] tracking-[-0.2px]">${squiggle(r[2])}</div>`;
  [...r[3]].forEach(c => {
    if (c === '.') html += `<div class="${stripe} border-r border-b border-[#d7e3e3]"></div>`;
    else html += `<div class="flex items-center justify-center ${roleCls[c]} font-bold text-[10px] tracking-normal border-r border-b border-[#d7e3e3]">${c}</div>`;
  });
  html += `<div class="${stripe}"></div>`;
});
document.getElementById('sheet').insertAdjacentHTML('beforeend', html);
</script>
</body>
</html>
